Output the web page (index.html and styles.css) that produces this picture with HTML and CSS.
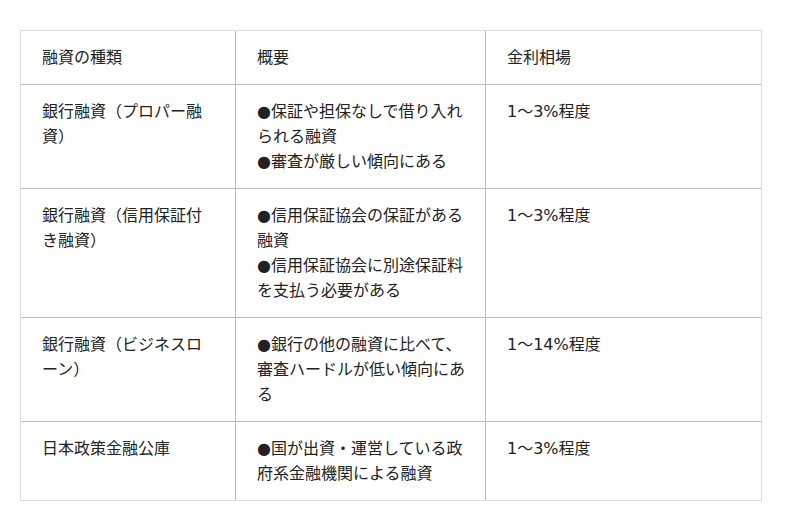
FILE: index.html
```html
<!DOCTYPE html>
<html lang="ja">
<head>
<meta charset="utf-8">
<link rel="stylesheet" href="styles.css">
</head>
<body>
<table class="loan-table">
  <colgroup>
    <col class="c1"><col class="c2"><col class="c3">
  </colgroup>
  <tr>
    <td>融資の種類</td>
    <td>概要</td>
    <td>金利相場</td>
  </tr>
  <tr>
    <td>銀行融資（プロパー融資）</td>
    <td>●保証や担保なしで借り入れられる融資<br>●審査が厳しい傾向にある</td>
    <td>1～3%程度</td>
  </tr>
  <tr>
    <td>銀行融資（信用保証付き融資）</td>
    <td>●信用保証協会の保証がある融資<br>●信用保証協会に別途保証料を支払う必要がある</td>
    <td>1～3%程度</td>
  </tr>
  <tr>
    <td>銀行融資（ビジネスローン）</td>
    <td>●銀行の他の融資に比べて、審査ハードルが低い傾向にある</td>
    <td>1～14%程度</td>
  </tr>
  <tr>
    <td>日本政策金融公庫</td>
    <td>●国が出資・運営している政府系金融機関による融資</td>
    <td>1～3%程度</td>
  </tr>
</table>
</body>
</html>
```
FILE: styles.css
```css
html, body {
  margin: 0;
  padding: 0;
  background: #fff;
}
body {
  padding: 30px 20px 0 20px;
  font-family: "DejaVu Sans", "Noto Sans CJK JP", sans-serif;
  font-size: 16px;
  line-height: 25px;
  color: #222;
}
.loan-table {
  border-collapse: separate;
  border-spacing: 0;
  table-layout: fixed;
  width: 742px;
  border: 1px solid #ddd;
}
.c1 { width: 215px; }
.c2 { width: 250px; }
.c3 { width: 275px; }
.loan-table td {
  vertical-align: top;
  padding: 14px 20px 14px 21px;
  border-right: 1px solid #bbb;
  border-bottom: 1px solid #bbb;
  word-break: normal;
}
.loan-table td:last-child {
  border-right: none;
}
.loan-table tr:last-child td {
  border-bottom: none;
}
```
